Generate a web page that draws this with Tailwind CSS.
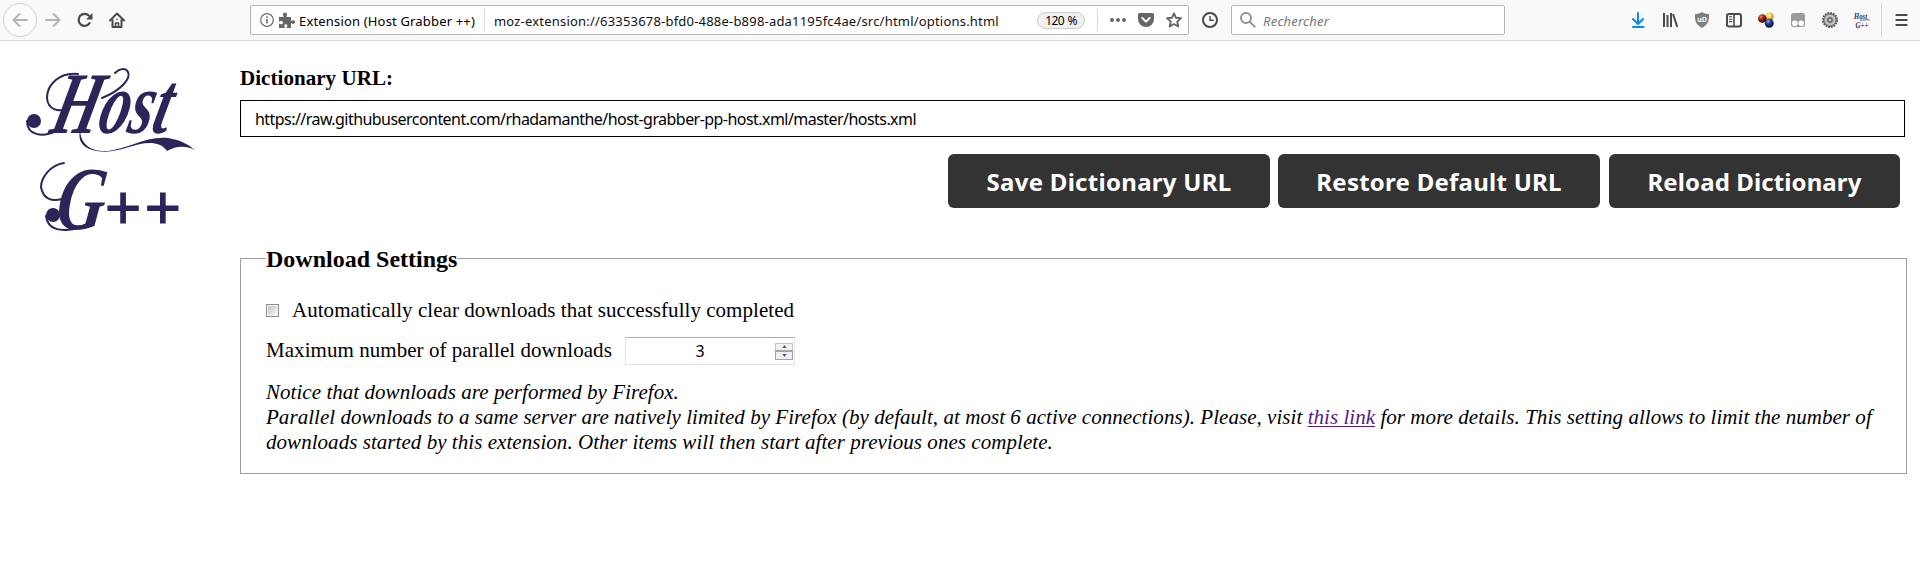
<!DOCTYPE html>
<html lang="en">
<head>
<meta charset="utf-8">
<title>Host Grabber ++</title>
<script src="https://cdn.jsdelivr.net/npm/@tailwindcss/browser@4"></script>
</head>
<body class="h-[585px] overflow-hidden bg-white text-black font-['Noto_Sans',sans-serif]">

<!-- Browser toolbar -->
<header class="flex h-[41px] items-center border-b border-[#d8d8d8] bg-[#f9f9f9] pl-[3px] whitespace-nowrap">
  <div class="flex size-[34px] shrink-0 items-center justify-center rounded-full border border-[#cfcfcf] bg-[#fbfbfb]">
    <svg class="size-4" viewBox="0 0 16 16" fill="none" stroke="#b4b4b4" stroke-width="2" stroke-linecap="round" stroke-linejoin="round"><path d="M15 8H1.5M7.5 2L1.500 8l6 6"/></svg>
  </div>
  <svg class="ml-2 size-4 shrink-0" viewBox="0 0 16 16" fill="none" stroke="#b4b4b4" stroke-width="2" stroke-linecap="round" stroke-linejoin="round"><path d="M1 8h13.500M8.500 2l6 6-6 6"/></svg>
  <svg class="ml-4 size-4 shrink-0" viewBox="0 0 16 16"><path d="M12.600 11.200A6 6 0 1 1 12 3.700" fill="none" stroke="#4a4a4a" stroke-width="2.200" stroke-linecap="round"/><path d="M15.500 1v6.500H9z" fill="#4a4a4a"/></svg>
  <svg class="ml-4 size-4 shrink-0" viewBox="0 0 16 16" fill="none" stroke="#4a4a4a" stroke-width="2" stroke-linejoin="round" stroke-linecap="round"><path d="M1 8.500L8 1.500l7 7M3.500 8v7h9V8"/><path d="M6.500 15v-4h3v4" stroke-width="1.600"/><path d="M8 7.200v.3" stroke-width="1.500"/></svg>

  <!-- Address bar -->
  <div class="ml-[125px] flex h-[30px] w-[939px] shrink-0 items-center rounded-[2px] border border-[#b6b6b6] bg-white">
    <svg class="ml-[9px] size-[14px] shrink-0" viewBox="0 0 14 14"><circle cx="7" cy="7" r="6.300" fill="none" stroke="#6b6b6b" stroke-width="1.200"/><path d="M7 6v4.500M7 3.200v1.500" stroke="#6b6b6b" stroke-width="1.600"/></svg>
    <svg class="ml-[5px] size-4 shrink-0" viewBox="0 0 16 16" fill="#666"><path d="M0 5h4.800C4.200 4 3.900 3 4 2.200 4.200.4 7.800.4 8 2.200 8.100 3 7.700 4 7.200 5H12v4c1-.7 2-1 2.800-.8 1.600.3 1.600 3.300 0 3.600C14 12 13 11.700 12 11v5H7.500c.5-1 .9-2 .7-2.800-.3-1.400-2.500-1.400-2.800 0-.2.800.2 1.800.7 2.800H0v-4.500c1 .6 2 .9 2.800.7 1.500-.3 1.500-2.800 0-3.100C2 8.900 1 9.200 0 9.800z"/></svg>
    <span class="ml-1 w-[176px] pt-[2px] text-[13px] leading-5 tracking-[0.17px]">Extension (Host Grabber ++)</span>
    <span class="ml-[9px] h-[22px] w-px bg-[#d9d9d9]"></span>
    <span class="ml-[9px] w-[505px] pt-[2px] text-[13px] leading-5 tracking-[0.2px] text-[#111]">moz-extension://63353678-bfd0-488e-b898-ada1195fc4ae/src/html/options.html</span>
    <span class="ml-[38px] flex h-[17px] w-[48px] items-center justify-center rounded-full border border-[#cacaca] bg-[#f0f0f0] pt-px text-[12px] tracking-[-0.6px] [word-spacing:1px]">120 %</span>
    <span class="ml-[12px] h-[22px] w-px bg-[#d9d9d9]"></span>
    <svg class="ml-[12px] size-4 shrink-0" viewBox="0 0 16 16" fill="#666"><circle cx="2" cy="8" r="2"/><circle cx="8" cy="8" r="2"/><circle cx="14" cy="8" r="2"/></svg>
    <svg class="ml-[12px] size-4 shrink-0" viewBox="0 0 16 16"><path d="M1.700 1h12.600C15.300 1 16 1.700 16 2.700V7A8 8 0 0 1 0 7V2.700C0 1.700.7 1 1.700 1z" fill="#666"/><path d="M4.300 6L8 9.600 11.700 6" fill="none" stroke="#fff" stroke-width="2" stroke-linecap="round" stroke-linejoin="round"/></svg>
    <svg class="ml-[12px] size-4 shrink-0" viewBox="0 0 16 16"><path d="M8 1.300l2 4.500 4.900.5-3.700 3.300 1.100 4.900L8 12l-4.300 2.500 1.100-4.900L1.100 6.300 6 5.800z" fill="none" stroke="#666" stroke-width="1.900" stroke-linejoin="round"/></svg>
  </div>

  <svg class="ml-[13px] size-4 shrink-0" viewBox="0 0 16 16" fill="none" stroke="#4a4a4a"><circle cx="8" cy="8" r="7" stroke-width="2"/><path d="M8 4v4.300h3.800" stroke-width="1.400"/></svg>

  <!-- Search box -->
  <div class="ml-[13px] flex h-[30px] w-[274px] shrink-0 items-center rounded-[2px] border border-[#b6b6b6] bg-white">
    <svg class="ml-[8px] size-4 shrink-0" viewBox="0 0 16 16" fill="none" stroke="#8f8f8f" stroke-width="1.900"><circle cx="6" cy="6" r="5"/><path d="M9.700 9.700l5.600 5.600"/></svg>
    <span class="ml-[7px] pt-[2px] text-[13px] leading-5 tracking-[0.22px] text-[#757575] italic">Rechercher</span>
  </div>

  <!-- Extension buttons -->
  <div class="ml-[125px] flex shrink-0 items-center gap-4">
    <svg class="size-4" viewBox="0 0 16 16" fill="none" stroke="#0a84ff" stroke-width="2" stroke-linecap="round" stroke-linejoin="round"><path d="M8 1v10.500M3 7l5 5 5-5M3 15h10.500"/></svg>
    <svg class="size-4" viewBox="0 0 16 16" fill="none" stroke="#4a4a4a" stroke-width="2"><path d="M2 1v14M5.500 3v12M9 1v14M11 2l4.300 13"/></svg>
    <svg class="size-4" viewBox="0 0 16 16"><path d="M8 0c2 1.500 4.500 2 7 2 0 6 0 10-7 14C1 12 1 8 1 2c2.500 0 5-.5 7-2z" fill="#7f7f7f"/><text x="8" y="9.500" text-anchor="middle" font-family="Noto Sans, sans-serif" font-size="7" font-weight="700" fill="#fff">uD</text></svg>
    <svg class="size-4" viewBox="0 0 16 16" fill="none" stroke="#4a4a4a"><rect x="1" y="2" width="14" height="12.500" rx="2" stroke-width="2"/><path d="M8 2v12" stroke-width="1.600"/><path d="M3 4.800h3.200M3 7.200h3.200M3 9.600h3.200" stroke-width="1.100"/></svg>
    <svg class="size-4" viewBox="0 0 16 16"><defs>
      <radialGradient id="red" cx=".35" cy=".3" r=".7"><stop offset="0" stop-color="#f08a76"/><stop offset=".4" stop-color="#b02418"/><stop offset="1" stop-color="#200302"/></radialGradient>
      <radialGradient id="yellow" cx=".4" cy=".35" r=".75"><stop offset="0" stop-color="#fff4c0"/><stop offset=".5" stop-color="#f0c544"/><stop offset="1" stop-color="#84640e"/></radialGradient>
      <radialGradient id="blue" cx=".4" cy=".3" r=".7"><stop offset="0" stop-color="#8fa8f0"/><stop offset=".4" stop-color="#2444a0"/><stop offset="1" stop-color="#030720"/></radialGradient></defs>
      <circle cx="11.500" cy="4.500" r="4" fill="url(#yellow)"/><circle cx="4.300" cy="6.500" r="4.300" fill="url(#red)"/><circle cx="11.200" cy="11.200" r="4.500" fill="url(#blue)"/></svg>
    <svg class="size-4" viewBox="0 0 16 16"><rect x="1" y="1" width="14" height="14" rx="2.500" fill="#9b9b9b"/><circle cx="4.800" cy="11.300" r="2.800" fill="#fff"/><circle cx="11.200" cy="11.300" r="2.800" fill="#fff"/></svg>
    <svg class="size-4" viewBox="0 0 16 16" fill="none"><circle cx="8" cy="8" r="7" stroke="#555" stroke-width="2" stroke-dasharray="1.700 1.050"/><circle cx="8" cy="8" r="6.300" fill="#a8a8a8" stroke="#5a5a5a" stroke-width="1"/><circle cx="8" cy="8" r="4.300" stroke="#d4d4d4" stroke-width="1.100"/><circle cx="8" cy="8" r="2.300" fill="#888" stroke="#555" stroke-width=".9"/><circle cx="8" cy="8" r=".9" fill="#eee"/></svg>
    <svg class="size-4" viewBox="0 0 16 16" fill="#2d2a5e" font-family="Liberation Serif, serif" font-style="italic" font-weight="700"><text x="0" y="7" font-size="8.500" textLength="13" lengthAdjust="spacingAndGlyphs">Host</text><text x="1.500" y="15.500" font-size="8" textLength="13" lengthAdjust="spacingAndGlyphs">G++</text><path d="M6 7.800c3 1.200 6-.8 9.500.2" fill="none" stroke="#2d2a5e" stroke-width=".7"/></svg>
  </div>
  <span class="ml-[11px] h-[34px] w-px bg-[#d6d6d6]"></span>
  <svg class="ml-[13px] h-4 w-[13px] shrink-0" viewBox="0 0 13 16" stroke="#4a4a4a" stroke-width="2" stroke-linecap="round"><path d="M1.300 3h10.400M1.300 8h10.400M1.300 13h10.400"/></svg>
</header>

<div class="flex">
  <!-- Extension logo -->
  <aside class="w-[240px] shrink-0 pt-[9px]">
    <svg class="h-[200px] w-[230px] overflow-visible" viewBox="0 50 230 200" fill="#2d2459" font-family="Liberation Serif, serif">
      <g font-style="italic" font-weight="700">
        <text transform="translate(48 133) skewX(-14)" font-size="88" textLength="118" lengthAdjust="spacingAndGlyphs">Host</text>
        <text transform="translate(54 229) skewX(-8)" font-size="90" textLength="48" lengthAdjust="spacingAndGlyphs">G</text>
      </g>
      <text x="105" y="228" font-family="Liberation Sans, sans-serif" font-size="62" letter-spacing="3.500" stroke="#2d2459" stroke-width="1.200">++</text>
      <path d="M80 130C81 147 94 152 108 151C128 149 145 136 168 138C181 140 189 145 195 150C185 145 176 146 167 151C163 146 160 144 152 143C136 142 120 153 101 151.500C86 150 77 144 80 130z"/>
      <circle cx="34" cy="121" r="7"/><circle cx="53" cy="215" r="7"/>
      <g fill="none" stroke="#2d2459" stroke-width="2" stroke-linecap="round">
        <path d="M27 121C27 135 42 138 56 131"/>
        <path d="M78 74C60 72 47 84 47 98C48 110 58 112 68 109"/>
        <path d="M46 216C48 231 62 231 74 229"/>
        <path d="M64 163C50 165 41 178 41 187C43 199 52 202 62 199"/>
        <path d="M102 98C122 90 131 78 128 72C125 67 119 69 115 73"/>
      </g>
    </svg>
  </aside>

  <main class="flex w-[1667px] flex-col pt-[25px] font-['Liberation_Serif',serif] text-[21px]">
    <label for="dict" class="h-6 leading-6 font-bold tracking-[0.05px]">Dictionary URL:</label>
    <input id="dict" type="text" value="https://raw.githubusercontent.com/rhadamanthe/host-grabber-pp-host.xml/master/hosts.xml" class="mt-[10px] h-[37px] w-[1665px] border border-black bg-white pt-px pl-[14px] font-['Noto_Sans',sans-serif] text-[16px] tracking-[-0.548px]">
    <div class="mt-[17px] flex h-[54px] justify-end gap-2 pr-[7px] font-['Noto_Sans',sans-serif] text-[24px] font-bold text-white">
      <button class="w-[322px] rounded-md bg-[#333] pt-[2px] tracking-[0.29px]">Save Dictionary URL</button>
      <button class="w-[322px] rounded-md bg-[#333] pt-[2px] tracking-[0.25px]">Restore Default URL</button>
      <button class="ml-px w-[291px] rounded-md bg-[#333] pt-[2px] tracking-[0.11px]">Reload Dictionary</button>
    </div>

    <fieldset class="mt-[36px] border border-[#9c9c9c] px-[25px] pb-[18px]">
      <legend class="h-7 text-[24px] leading-[30px] font-bold">Download Settings</legend>
      <div class="mt-[26px] flex h-6 items-center">
        <span class="flex size-[13px] items-center justify-center border border-[#8e8f8f] bg-[#f4f4f4]"><span class="size-[9px] bg-linear-to-br from-[#bfc4c9] to-[#f6f6f6]"></span></span>
        <span class="ml-[13px] leading-6 tracking-[0.04px]">Automatically clear downloads that successfully completed</span>
      </div>
      <div class="mt-[15px] flex h-7 items-center">
        <span class="w-[346px] pb-[2px] leading-6 tracking-[0.05px] whitespace-nowrap">Maximum number of parallel downloads</span>
        <div class="ml-[13px] flex h-7 w-[170px] items-center border border-[#e2e3ea] border-t-[#abadb3] bg-white">
          <span class="w-[148px] text-center font-['Noto_Sans',sans-serif] text-[16px] leading-6">3</span>
          <span class="ml-px flex h-[17px] w-[18px] flex-col">
            <span class="flex h-[8px] items-center justify-center border border-[#c3c3c3] border-b-[#a3a3a3] bg-[#f0f0f0]"><svg class="h-[3px] w-[5px]" viewBox="0 0 6 4" fill="#4a5fa8"><path d="M0 4L3 0 6 4z"/></svg></span>
            <span class="flex h-[9px] items-center justify-center border border-[#a3a3a3] bg-[#f0f0f0]"><svg class="h-[3px] w-[5px]" viewBox="0 0 6 4" fill="#4a5fa8"><path d="M0 0L3 4 6 0z"/></svg></span>
          </span>
        </div>
      </div>
      <p class="mt-[15px] leading-[25px] tracking-[0.045px] whitespace-nowrap italic">Notice that downloads are performed by Firefox.<br>Parallel downloads to a same server are natively limited by Firefox (by default, at most 6 active connections). Please, visit <a href="#" class="text-[#551a8b] underline decoration-1 underline-offset-2">this link</a> for more details. This setting allows to limit the number of<br>downloads started by this extension. Other items will then start after previous ones complete.</p>
    </fieldset>
  </main>
</div>
</body>
</html>
